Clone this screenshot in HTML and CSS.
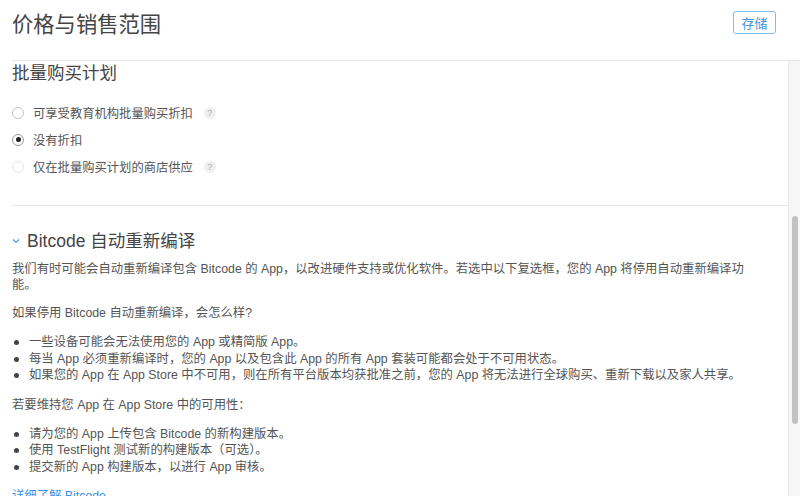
FILE: index.html
```html
<!DOCTYPE html>
<html>
<head>
	<meta charset="utf-8">
	<title>价格与销售范围</title>
	<link rel="stylesheet" href="styles.css">
</head>
<body>
<div class="page">

	<header class="topbar">
		<h1 class="title">价格与销售范围</h1>
		<button class="save">存储</button>
	</header>

	<div class="body">
		<main class="content">

			<section class="purchase">
				<h2 class="heading">批量购买计划</h2>
				<div class="options">
					<label class="option">
						<span class="radio"></span>
						<span>可享受教育机构批量购买折扣</span>
						<span class="help">?</span>
					</label>
					<label class="option">
						<span class="radio checked"></span>
						<span>没有折扣</span>
					</label>
					<label class="option">
						<span class="radio disabled"></span>
						<span>仅在批量购买计划的商店供应</span>
						<span class="help">?</span>
					</label>
				</div>
			</section>

			<section class="bitcode">
				<h2 class="heading toggle">
					<svg class="chev" width="8" height="6" viewBox="0 0 8 6"><polyline points="1,1.5 4,4.5 7,1.5" fill="none" stroke="#4a9ce8" stroke-width="1.2"/></svg>
					<span>Bitcode 自动重新编译</span>
				</h2>
				<p>我们有时可能会自动重新编译包含 Bitcode 的 App，以改进硬件支持或优化软件。若选中以下复选框，您的 App 将停用自动重新编译功能。</p>
				<p>如果停用 Bitcode 自动重新编译，会怎么样?</p>
				<ul>
					<li>一些设备可能会无法使用您的 App 或精简版 App。</li>
					<li>每当 App 必须重新编译时，您的 App 以及包含此 App 的所有 App 套装可能都会处于不可用状态。</li>
					<li>如果您的 App 在 App Store 中不可用，则在所有平台版本均获批准之前，您的 App 将无法进行全球购买、重新下载以及家人共享。</li>
				</ul>
				<p>若要维持您 App 在 App Store 中的可用性：</p>
				<ul>
					<li>请为您的 App 上传包含 Bitcode 的新构建版本。</li>
					<li>使用 TestFlight 测试新的构建版本（可选）。</li>
					<li>提交新的 App 构建版本，以进行 App 审核。</li>
				</ul>
				<a class="more" href="#">详细了解 Bitcode</a>
			</section>

		</main>

		<!-- fake scrollbar -->
		<div class="track"><div class="thumb"></div></div>
	</div>

</div>
</body>
</html>
```

FILE: styles.css
```css
body{
	margin: 0;
	font-family: "Liberation Sans", "Noto Sans CJK SC", sans-serif;
	color: #555;
	background: #fff;
}

.page{
	width: 800px;
	height: 496px;
	display: flex;
	flex-direction: column;
	overflow: hidden;
}

.topbar{
	height: 44px;
	padding: 0 24px 16px 0;
	margin-left: 12px;
	border-bottom: 1px solid #e6e6e6;
	display: flex;
	align-items: center;
	justify-content: space-between;
}

.title{
	margin: 0;
	font-size: 21.3px;
	font-weight: normal;
	color: #444;
}

.save{
	width: 43px;
	height: 23px;
	padding: 0;
	border: 1px solid #7fbcf2;
	border-radius: 3px;
	background: #fff;
	color: #3f96e6;
	font-family: inherit;
	font-size: 13px;
	margin-top: 1px;
}

.body{
	flex: 1;
	display: flex;
	min-height: 0;
}

.content{
	flex: 1;
	padding-left: 12px;
	overflow: hidden;
}

.heading{
	margin: 0;
	font-size: 17.5px;
	font-weight: normal;
	line-height: 24px;
	color: #444;
}

.purchase{
	padding-bottom: 25px;
	border-bottom: 1px solid #e6e6e6;
}

.options{
	margin-top: 14px;
	font-size: 12.3px;
}

.option{
	display: flex;
	align-items: center;
	height: 27px;
}

.radio{
	width: 10px;
	height: 10px;
	border: 1px solid #c4c4c4;
	border-radius: 50%;
	margin-right: 9px;
	display: flex;
	align-items: center;
	justify-content: center;
}
.radio.checked{border-color: #999;}
.radio.checked::after{
	content: "";
	width: 5px;
	height: 5px;
	border-radius: 50%;
	background: #222;
}
.radio.disabled{border-color: #e6e6e6;}

.help{
	width: 12px;
	height: 12px;
	margin-left: 11px;
	border-radius: 50%;
	background: #f0f0f0;
	color: #aaa;
	font-size: 9px;
	line-height: 12px;
	text-align: center;
}

.bitcode{
	padding-top: 23px;
	padding-right: 41px;
	font-size: 12.35px;
	line-height: 16px;
}

.toggle{
	display: flex;
	align-items: center;
	margin-bottom: 8px;
}
.chev{margin: 0 7px 0 0;}

.bitcode p{margin: 0 0 12px;}

.bitcode ul{
	list-style: none;
	padding: 0;
	margin: 13px 0 13px;
}
.bitcode li{
	display: flex;
	line-height: 16.5px;
}
.bitcode li::before{
	content: "";
	flex: none;
	width: 5px;
	height: 5px;
	border-radius: 50%;
	background: #444;
	margin: 6px 10px 0 2px;
}

.more{
	display: block;
	margin-top: 11px;
	color: #3a8ee6;
	text-decoration: none;
}

.track{
	width: 11px;
	background: #f6f6f6;
	border-left: 1px solid #e8e8e8;
	padding-top: 155px;
}
.thumb{
	width: 6px;
	height: 208px;
	margin-left: 3px;
	border-radius: 3px;
	background: #c2c2c2;
}
```
